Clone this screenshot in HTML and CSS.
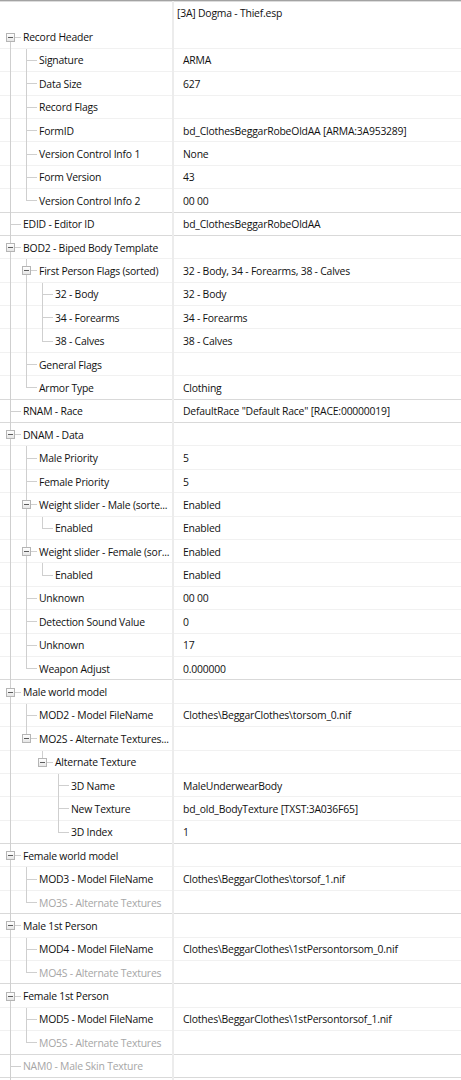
FILE: index.html
```html
<!DOCTYPE html>
<html lang="en">
<head>
    <meta charset="UTF-8">
    <title>Record View</title>
    <link rel="stylesheet" href="styles.css">
</head>
<body>
    <div class="view">
        <div class="head">
            <div class="tree"></div>
            <div class="value">[3A] Dogma - Thief.esp</div>
        </div>

        <!-- Record Header -->
        <div class="row">
            <div class="tree"><span class="node first"><i class="box"></i></span><span class="name">Record Header</span></div>
            <div class="value"></div>
        </div>
        <div class="row">
            <div class="tree"><span class="pipe"></span><span class="node tee"></span><span class="name">Signature</span></div>
            <div class="value">ARMA</div>
        </div>
        <div class="row">
            <div class="tree"><span class="pipe"></span><span class="node tee"></span><span class="name">Data Size</span></div>
            <div class="value">627</div>
        </div>
        <div class="row">
            <div class="tree"><span class="pipe"></span><span class="node tee"></span><span class="name">Record Flags</span></div>
            <div class="value"></div>
        </div>
        <div class="row">
            <div class="tree"><span class="pipe"></span><span class="node tee"></span><span class="name">FormID</span></div>
            <div class="value">bd_ClothesBeggarRobeOldAA [ARMA:3A953289]</div>
        </div>
        <div class="row">
            <div class="tree"><span class="pipe"></span><span class="node tee"></span><span class="name">Version Control Info 1</span></div>
            <div class="value">None</div>
        </div>
        <div class="row">
            <div class="tree"><span class="pipe"></span><span class="node tee"></span><span class="name">Form Version</span></div>
            <div class="value">43</div>
        </div>
        <div class="row end">
            <div class="tree"><span class="pipe"></span><span class="node elbow"></span><span class="name">Version Control Info 2</span></div>
            <div class="value">00 00</div>
        </div>

        <div class="row end">
            <div class="tree"><span class="node tee"></span><span class="name">EDID - Editor ID</span></div>
            <div class="value">bd_ClothesBeggarRobeOldAA</div>
        </div>

        <!-- BOD2 -->
        <div class="row">
            <div class="tree"><span class="node tee"><i class="box"></i></span><span class="name">BOD2 - Biped Body Template</span></div>
            <div class="value"></div>
        </div>
        <div class="row">
            <div class="tree"><span class="pipe"></span><span class="node tee"><i class="box"></i></span><span class="name">First Person Flags (sorted)</span></div>
            <div class="value">32 - Body, 34 - Forearms, 38 - Calves</div>
        </div>
        <div class="row">
            <div class="tree"><span class="pipe"></span><span class="pipe"></span><span class="node tee"></span><span class="name">32 - Body</span></div>
            <div class="value">32 - Body</div>
        </div>
        <div class="row">
            <div class="tree"><span class="pipe"></span><span class="pipe"></span><span class="node tee"></span><span class="name">34 - Forearms</span></div>
            <div class="value">34 - Forearms</div>
        </div>
        <div class="row">
            <div class="tree"><span class="pipe"></span><span class="pipe"></span><span class="node elbow"></span><span class="name">38 - Calves</span></div>
            <div class="value">38 - Calves</div>
        </div>
        <div class="row">
            <div class="tree"><span class="pipe"></span><span class="node tee"></span><span class="name">General Flags</span></div>
            <div class="value"></div>
        </div>
        <div class="row end">
            <div class="tree"><span class="pipe"></span><span class="node elbow"></span><span class="name">Armor Type</span></div>
            <div class="value">Clothing</div>
        </div>

        <div class="row end">
            <div class="tree"><span class="node tee"></span><span class="name">RNAM - Race</span></div>
            <div class="value">DefaultRace "Default Race" [RACE:00000019]</div>
        </div>

        <!-- DNAM -->
        <div class="row">
            <div class="tree"><span class="node tee"><i class="box"></i></span><span class="name">DNAM - Data</span></div>
            <div class="value"></div>
        </div>
        <div class="row">
            <div class="tree"><span class="pipe"></span><span class="node tee"></span><span class="name">Male Priority</span></div>
            <div class="value">5</div>
        </div>
        <div class="row">
            <div class="tree"><span class="pipe"></span><span class="node tee"></span><span class="name">Female Priority</span></div>
            <div class="value">5</div>
        </div>
        <div class="row">
            <div class="tree"><span class="pipe"></span><span class="node tee"><i class="box"></i></span><span class="name">Weight slider - Male (sorte...</span></div>
            <div class="value">Enabled</div>
        </div>
        <div class="row">
            <div class="tree"><span class="pipe"></span><span class="pipe"></span><span class="node elbow"></span><span class="name">Enabled</span></div>
            <div class="value">Enabled</div>
        </div>
        <div class="row">
            <div class="tree"><span class="pipe"></span><span class="node tee"><i class="box"></i></span><span class="name">Weight slider - Female (sor...</span></div>
            <div class="value">Enabled</div>
        </div>
        <div class="row">
            <div class="tree"><span class="pipe"></span><span class="pipe"></span><span class="node elbow"></span><span class="name">Enabled</span></div>
            <div class="value">Enabled</div>
        </div>
        <div class="row">
            <div class="tree"><span class="pipe"></span><span class="node tee"></span><span class="name">Unknown</span></div>
            <div class="value">00 00</div>
        </div>
        <div class="row">
            <div class="tree"><span class="pipe"></span><span class="node tee"></span><span class="name">Detection Sound Value</span></div>
            <div class="value">0</div>
        </div>
        <div class="row">
            <div class="tree"><span class="pipe"></span><span class="node tee"></span><span class="name">Unknown</span></div>
            <div class="value">17</div>
        </div>
        <div class="row end">
            <div class="tree"><span class="pipe"></span><span class="node elbow"></span><span class="name">Weapon Adjust</span></div>
            <div class="value">0.000000</div>
        </div>

        <!-- Male world model -->
        <div class="row">
            <div class="tree"><span class="node tee"><i class="box"></i></span><span class="name">Male world model</span></div>
            <div class="value"></div>
        </div>
        <div class="row">
            <div class="tree"><span class="pipe"></span><span class="node tee"></span><span class="name">MOD2 - Model FileName</span></div>
            <div class="value">Clothes\BeggarClothes\torsom_0.nif</div>
        </div>
        <div class="row">
            <div class="tree"><span class="pipe"></span><span class="node elbow"><i class="box"></i></span><span class="name">MO2S - Alternate Textures...</span></div>
            <div class="value"></div>
        </div>
        <div class="row">
            <div class="tree"><span class="pipe"></span><span class="gap"></span><span class="node elbow"><i class="box"></i></span><span class="name">Alternate Texture</span></div>
            <div class="value"></div>
        </div>
        <div class="row">
            <div class="tree"><span class="pipe"></span><span class="gap"></span><span class="gap"></span><span class="node tee"></span><span class="name">3D Name</span></div>
            <div class="value">MaleUnderwearBody</div>
        </div>
        <div class="row">
            <div class="tree"><span class="pipe"></span><span class="gap"></span><span class="gap"></span><span class="node tee"></span><span class="name">New Texture</span></div>
            <div class="value">bd_old_BodyTexture [TXST:3A036F65]</div>
        </div>
        <div class="row end">
            <div class="tree"><span class="pipe"></span><span class="gap"></span><span class="gap"></span><span class="node elbow"></span><span class="name">3D Index</span></div>
            <div class="value">1</div>
        </div>

        <!-- Female world model -->
        <div class="row">
            <div class="tree"><span class="node tee"><i class="box"></i></span><span class="name">Female world model</span></div>
            <div class="value"></div>
        </div>
        <div class="row">
            <div class="tree"><span class="pipe"></span><span class="node tee"></span><span class="name">MOD3 - Model FileName</span></div>
            <div class="value">Clothes\BeggarClothes\torsof_1.nif</div>
        </div>
        <div class="row end off">
            <div class="tree"><span class="pipe"></span><span class="node elbow"></span><span class="name">MO3S - Alternate Textures</span></div>
            <div class="value"></div>
        </div>

        <!-- Male 1st Person -->
        <div class="row">
            <div class="tree"><span class="node tee"><i class="box"></i></span><span class="name">Male 1st Person</span></div>
            <div class="value"></div>
        </div>
        <div class="row">
            <div class="tree"><span class="pipe"></span><span class="node tee"></span><span class="name">MOD4 - Model FileName</span></div>
            <div class="value">Clothes\BeggarClothes\1stPersontorsom_0.nif</div>
        </div>
        <div class="row end off">
            <div class="tree"><span class="pipe"></span><span class="node elbow"></span><span class="name">MO4S - Alternate Textures</span></div>
            <div class="value"></div>
        </div>

        <!-- Female 1st Person -->
        <div class="row">
            <div class="tree"><span class="node tee"><i class="box"></i></span><span class="name">Female 1st Person</span></div>
            <div class="value"></div>
        </div>
        <div class="row">
            <div class="tree"><span class="pipe"></span><span class="node tee"></span><span class="name">MOD5 - Model FileName</span></div>
            <div class="value">Clothes\BeggarClothes\1stPersontorsof_1.nif</div>
        </div>
        <div class="row end off">
            <div class="tree"><span class="pipe"></span><span class="node elbow"></span><span class="name">MO5S - Alternate Textures</span></div>
            <div class="value"></div>
        </div>

        <div class="row end off">
            <div class="tree"><span class="node tee"></span><span class="name">NAM0 - Male Skin Texture</span></div>
            <div class="value"></div>
        </div>
        <div class="row">
            <div class="tree"><span class="pipe"></span></div>
            <div class="value"></div>
        </div>
    </div>
</body>
</html>
```
FILE: styles.css
```css
body {
    margin: 0;
    background: #ffffff;
    font-family: "Open Sans", "Noto Sans", sans-serif;
    font-size: 10.4px;
    letter-spacing: -0.2px;
    color: #111111;
    overflow: hidden;
}

.view {
    border-top: 1px solid #a3a3a3;
    box-shadow: inset 0 1px #dcdcdc;
}

.head,
.row {
    display: flex;
    height: 23.4px;
    white-space: nowrap;
}
.head {
    height: 24.4px;
}
.row {
    box-shadow: inset 0 -1px #f1f1f1;
}
.row.end {
    box-shadow: inset 0 -1px #d9d9d9;
}
.row.off {
    color: #a6a6a6;
}

/* left column: tree lines + label */
.tree {
    display: flex;
    align-items: stretch;
    width: 174px;
    flex: none;
    padding-left: 2px;
    box-sizing: border-box;
    overflow: hidden;
    border-right: 2px solid #ececec;
}
.name {
    display: flex;
    align-items: center;
    margin-left: 2px;
}

/* guide cells, 16px per level, line sits on the 9th pixel */
.pipe,
.gap {
    width: 16px;
    flex: none;
}
.pipe {
    background: linear-gradient(#cfcfcf, #cfcfcf) no-repeat 8px 0 / 1px 100%;
}
.node {
    display: flex;
    align-items: center;
    width: 19px;
    flex: none;
}
.node.tee {
    background:
        linear-gradient(#cfcfcf, #cfcfcf) no-repeat 8px 0 / 1px 100%,
        linear-gradient(#cfcfcf, #cfcfcf) no-repeat 8px 50% / 11px 1px;
}
.node.elbow {
    background:
        linear-gradient(#cfcfcf, #cfcfcf) no-repeat 8px 0 / 1px 50%,
        linear-gradient(#cfcfcf, #cfcfcf) no-repeat 8px 50% / 11px 1px;
}
.node.first {
    background:
        linear-gradient(#cfcfcf, #cfcfcf) no-repeat 8px 100% / 1px 50%,
        linear-gradient(#cfcfcf, #cfcfcf) no-repeat 8px 50% / 11px 1px;
}

/* expanded box with minus sign */
.box {
    position: relative;
    width: 9px;
    height: 9px;
    margin-left: 4px;
    box-sizing: border-box;
    border: 1px solid #b5b5b5;
    background: linear-gradient(#ffffff, #e6e6e6);
}
.box::after {
    content: "";
    position: absolute;
    left: 1px;
    top: 3px;
    width: 5px;
    height: 1px;
    background: #5c5c5c;
}

/* right column */
.value {
    display: flex;
    align-items: center;
    padding-left: 9px;
}
.head .value {
    padding-left: 3px;
}
```
